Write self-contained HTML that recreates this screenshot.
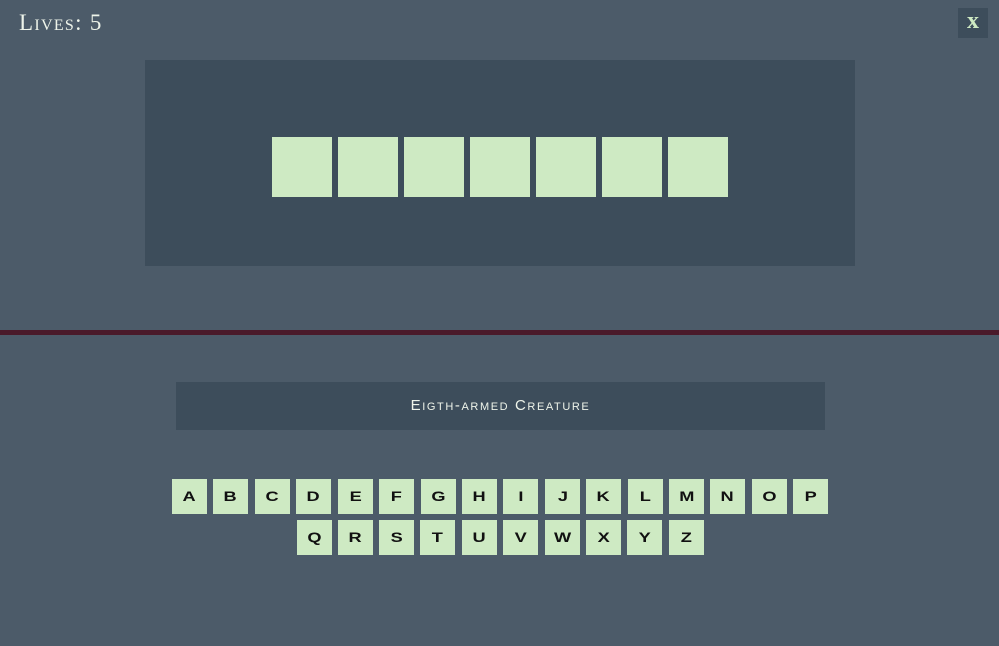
<!DOCTYPE html>
<html><head><style>
body{margin:0;width:999px;height:646px;background:#4c5b69;position:relative;overflow:hidden;font-family:"Liberation Sans",sans-serif}
.lives{position:absolute;left:19px;top:10px;color:#eef4ea;font-family:"Liberation Serif",serif;font-variant:small-caps;font-size:23px;letter-spacing:1.3px}
.x{position:absolute;left:958px;top:8px;width:30px;height:30px;background:#3d4d5b;color:#ceeac3;font-weight:bold;font-size:24px;text-align:center;line-height:26px;font-family:"Liberation Serif",serif}
.panel{position:absolute;left:145px;top:60px;width:710px;height:206px;background:#3d4d5b}
.tile{position:absolute;top:77px;width:60px;height:60px;background:#ceeac3}
.line{position:absolute;left:0;top:330px;width:999px;height:5px;background:#4a1a2a}
.hint{position:absolute;left:176px;top:382px;width:649px;height:48px;background:#3d4d5b;color:#eef4ea;text-align:center;line-height:48px;font-variant:small-caps;font-size:15px;letter-spacing:1.6px}
.k{position:absolute;width:35px;height:35px;background:#ceeac3;color:#111;font-weight:bold;font-size:14px;text-align:center;line-height:35px;letter-spacing:0}
.k span{display:inline-block;transform:scaleX(1.3)}
</style></head><body>
<div class="lives">Lives: 5</div>
<div class="x">x</div>
<div class="panel">
<div class="tile" style="left:127px"></div><div class="tile" style="left:193px"></div><div class="tile" style="left:259px"></div><div class="tile" style="left:325px"></div><div class="tile" style="left:391px"></div><div class="tile" style="left:457px"></div><div class="tile" style="left:523px"></div>
</div>
<div class="line"></div>
<div class="hint">Eigth-armed Creature</div>
<div class="k" style="left:172px;top:479px"><span>A</span></div>
<div class="k" style="left:213px;top:479px"><span>B</span></div>
<div class="k" style="left:255px;top:479px"><span>C</span></div>
<div class="k" style="left:296px;top:479px"><span>D</span></div>
<div class="k" style="left:338px;top:479px"><span>E</span></div>
<div class="k" style="left:379px;top:479px"><span>F</span></div>
<div class="k" style="left:421px;top:479px"><span>G</span></div>
<div class="k" style="left:462px;top:479px"><span>H</span></div>
<div class="k" style="left:503px;top:479px"><span>I</span></div>
<div class="k" style="left:545px;top:479px"><span>J</span></div>
<div class="k" style="left:586px;top:479px"><span>K</span></div>
<div class="k" style="left:628px;top:479px"><span>L</span></div>
<div class="k" style="left:669px;top:479px"><span>M</span></div>
<div class="k" style="left:710px;top:479px"><span>N</span></div>
<div class="k" style="left:752px;top:479px"><span>O</span></div>
<div class="k" style="left:793px;top:479px"><span>P</span></div>
<div class="k" style="left:297px;top:520px"><span>Q</span></div>
<div class="k" style="left:338px;top:520px"><span>R</span></div>
<div class="k" style="left:379px;top:520px"><span>S</span></div>
<div class="k" style="left:420px;top:520px"><span>T</span></div>
<div class="k" style="left:462px;top:520px"><span>U</span></div>
<div class="k" style="left:503px;top:520px"><span>V</span></div>
<div class="k" style="left:545px;top:520px"><span>W</span></div>
<div class="k" style="left:586px;top:520px"><span>X</span></div>
<div class="k" style="left:627px;top:520px"><span>Y</span></div>
<div class="k" style="left:669px;top:520px"><span>Z</span></div>
</body></html>
